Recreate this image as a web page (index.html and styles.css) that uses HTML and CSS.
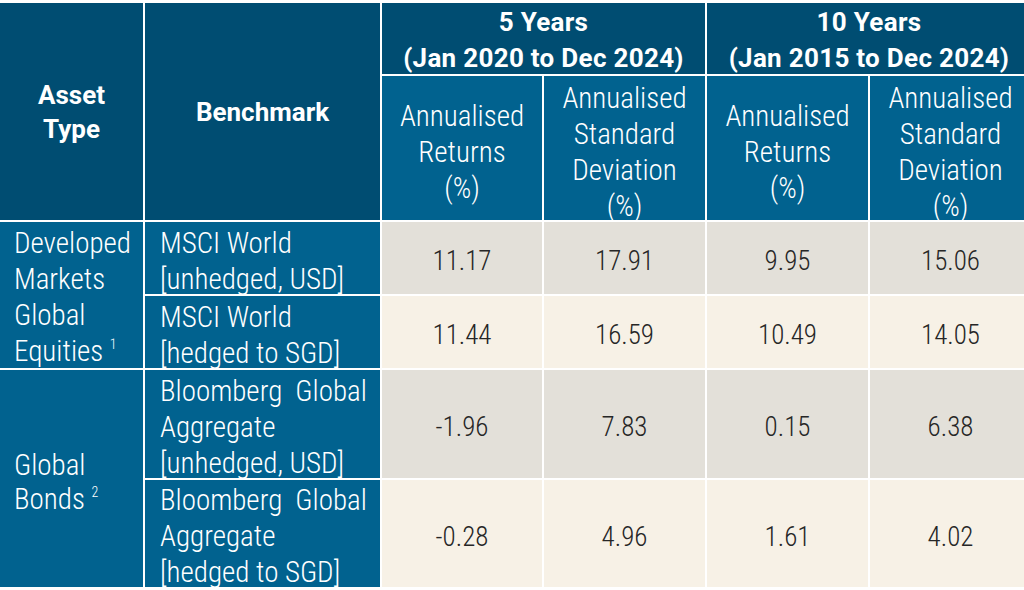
FILE: index.html
```html
<!DOCTYPE html>
<html>
<head>
<meta charset="utf-8">
<link rel="stylesheet" href="styles.css">
</head>
<body>
<div class="table">
  <div class="cell head dark span-rows-2 c1 bold"><span class="txt">Asset<br>Type</span></div>
  <div class="cell head dark span-rows-2 c2 bold"><span class="txt">Benchmark</span></div>
  <div class="cell head dark group bold"><span class="txt">5 Years<br>(Jan 2020 to Dec 2024)</span></div>
  <div class="cell head dark group bold"><span class="txt">10 Years<br>(Jan 2015 to Dec 2024)</span></div>
  <div class="cell head sub"><span class="txt">Annualised<br>Returns<br>(%)</span></div>
  <div class="cell head sub"><span class="txt">Annualised<br>Standard<br>Deviation<br>(%)</span></div>
  <div class="cell head sub"><span class="txt">Annualised<br>Returns<br>(%)</span></div>
  <div class="cell head sub"><span class="txt">Annualised<br>Standard<br>Deviation<br>(%)</span></div>

  <div class="cell label asset r-dm"><span class="txt">Developed<br>Markets<br>Global<br>Equities <sup>1</sup></span></div>
  <div class="cell label bench"><span class="txt">MSCI World<br>[unhedged, USD]</span></div>
  <div class="cell num grey"><span class="txt">11.17</span></div>
  <div class="cell num grey"><span class="txt">17.91</span></div>
  <div class="cell num grey"><span class="txt">9.95</span></div>
  <div class="cell num grey"><span class="txt">15.06</span></div>

  <div class="cell label bench"><span class="txt">MSCI World<br>[hedged to SGD]</span></div>
  <div class="cell num cream"><span class="txt">11.44</span></div>
  <div class="cell num cream"><span class="txt">16.59</span></div>
  <div class="cell num cream"><span class="txt">10.49</span></div>
  <div class="cell num cream"><span class="txt">14.05</span></div>

  <div class="cell label asset r-gb"><span class="txt">Global<br>Bonds <sup>2</sup></span></div>
  <div class="cell label bench"><span class="txt">Bloomberg&nbsp; Global<br>Aggregate<br>[unhedged, USD]</span></div>
  <div class="cell num grey"><span class="txt">-1.96</span></div>
  <div class="cell num grey"><span class="txt">7.83</span></div>
  <div class="cell num grey"><span class="txt">0.15</span></div>
  <div class="cell num grey"><span class="txt">6.38</span></div>

  <div class="cell label bench"><span class="txt">Bloomberg&nbsp; Global<br>Aggregate<br>[hedged to SGD]</span></div>
  <div class="cell num cream"><span class="txt">-0.28</span></div>
  <div class="cell num cream"><span class="txt">4.96</span></div>
  <div class="cell num cream"><span class="txt">1.61</span></div>
  <div class="cell num cream"><span class="txt">4.02</span></div>
</div>
</body>
</html>
```
FILE: styles.css
```css
html, body {
  margin: 0;
  padding: 0;
  background: #ffffff;
  overflow: hidden;
}
body {
  width: 1024px;
  height: 590px;
}
.table {
  display: grid;
  grid-template-columns: 143px 235px 160px 161px 161px 161px;
  grid-template-rows: 71px 144px 72px 72px 108px 107px;
  gap: 2px;
  padding-top: 3px;
  width: 1031px;
  background: #ffffff;
  font-family: Roboto, "Open Sans", sans-serif;
  font-size: 29px;
  font-stretch: 85%;
  line-height: 36px;
}
.cell {
  display: flex;
  align-items: center;
}
.txt {
  display: block;
  white-space: nowrap;
}
.head {
  color: #ffffff;
  text-align: center;
  justify-content: center;
  font-weight: 300;
}
.bold {
  font-weight: 700;
  font-stretch: 100%;
  font-size: 26px;
}
.dark {
  background: #004d72;
}
.span-rows-2 {
  grid-row: span 2;
  line-height: 34px;
}
.group {
  grid-column: span 2;
  padding-top: 2px;
  letter-spacing: 0.3px;
}
.sub {
  background: #01628f;
  padding-top: 7px;
}
.label {
  background: #01628f;
  color: #ffffff;
  font-weight: 300;
}
.asset {
  padding-left: 14px;
  grid-column: 1;
}
.r-dm {
  grid-row: 3 / span 2;
  padding-top: 4px;
}
.r-gb {
  grid-row: 5 / span 2;
  line-height: 34px;
  padding-top: 6px;
}
.bench {
  grid-column: 2;
  padding-left: 15px;
  padding-top: 5px;
}
.num {
  justify-content: center;
  color: #262626;
  font-size: 27px;
  font-weight: 300;
  font-stretch: 80%;
  padding-top: 6px;
}
.grey {
  background: #e3e0d9;
}
.cream {
  background: #f7f1e6;
}
sup {
  font-size: 14px;
  line-height: 0;
  vertical-align: 12px;
}
```
